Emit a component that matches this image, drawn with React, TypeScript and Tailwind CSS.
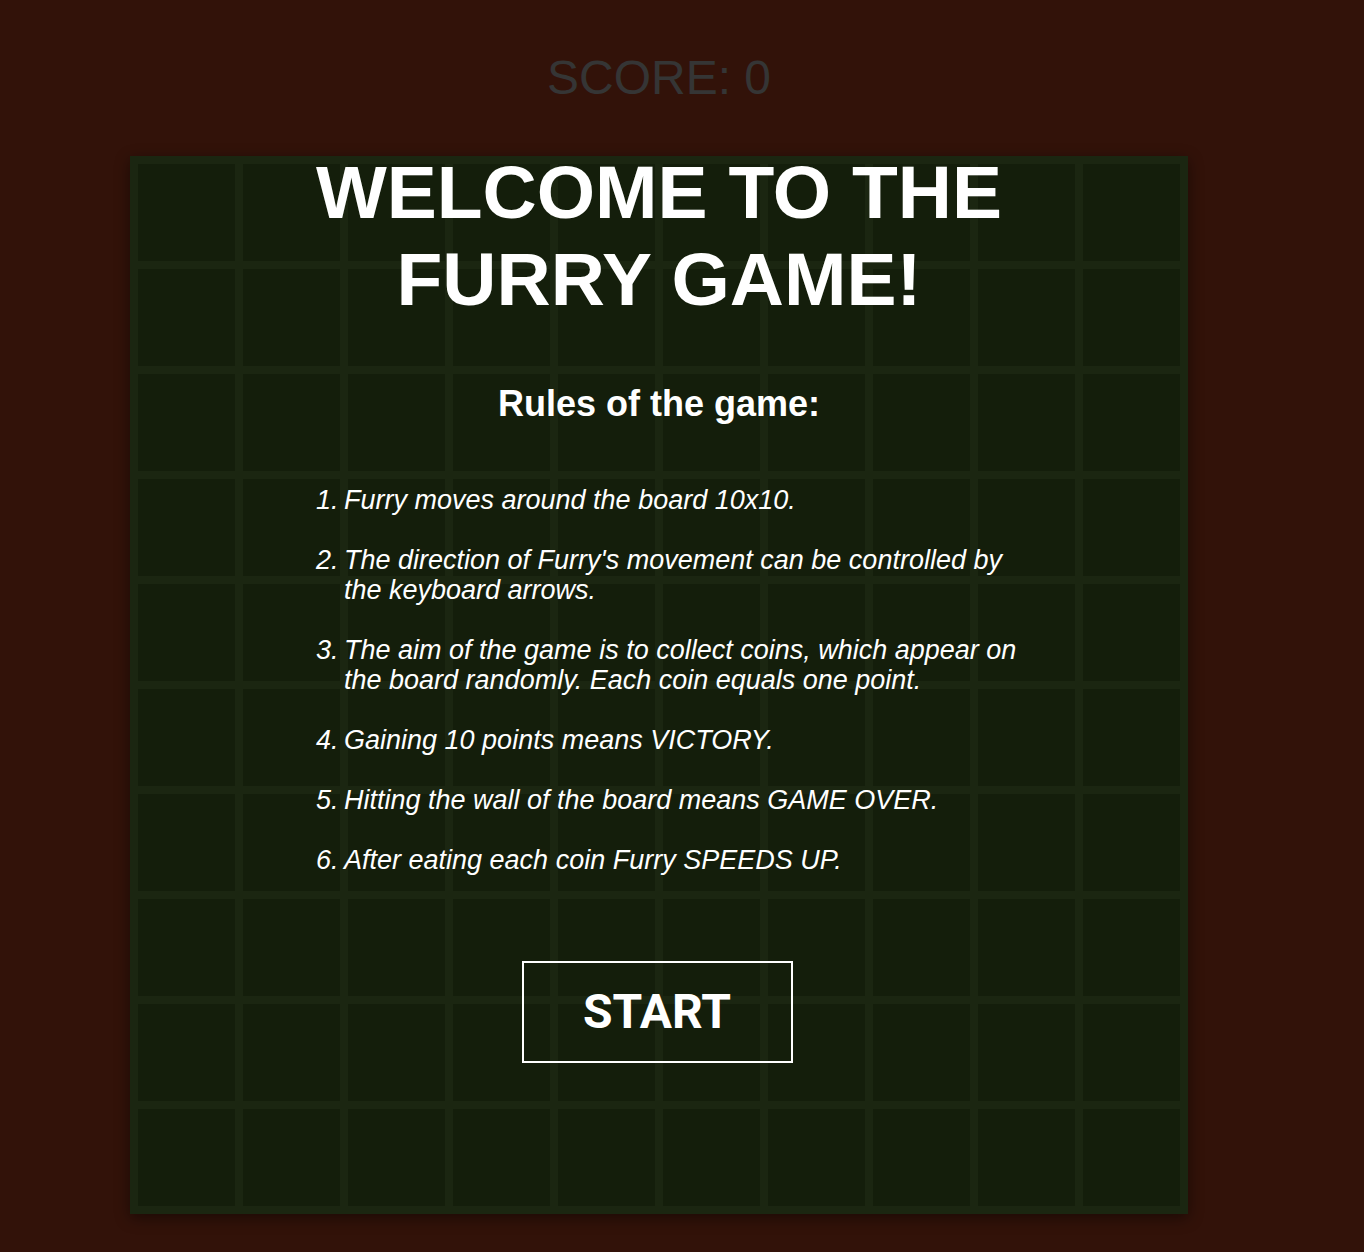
import React from "react";

const rules: string[] = [
  "Furry moves around the board 10x10.",
  "The direction of Furry's movement can be controlled by the keyboard arrows.",
  "The aim of the game is to collect coins, which appear on the board randomly. Each coin equals one point.",
  "Gaining 10 points means VICTORY.",
  "Hitting the wall of the board means GAME OVER.",
  "After eating each coin Furry SPEEDS UP.",
];

export default function App() {
  const cells = Array.from({ length: 100 }, (_, i) => i);

  return (
    <main className="min-h-screen bg-[#321209] font-['Liberation_Sans',Arial,sans-serif]">
      <div className="w-[1318px] flex flex-col items-center">
        {/* score */}
        <div className="mt-[50px] text-[48px] leading-[55px] text-[#353535]">SCORE: 0</div>

        {/* board */}
        <section className="relative mt-[51px] border-4 border-[#1b2611] shadow-[0_4px_14px_rgba(0,0,0,0.45)]">
          <div className="grid grid-cols-[repeat(10,105px)] grid-rows-[repeat(10,105px)]">
            {cells.map((c) => (
              <div key={c} className="border-4 border-[#1b2611] bg-[#141e0b]" />
            ))}
          </div>

          {/* start screen overlay */}
          <div className="absolute left-0 right-0 top-[-11px] flex flex-col items-center text-white">
            <h1 className="w-[720px] text-center text-[75px] leading-[87px] font-bold">
              WELCOME TO THE FURRY GAME!
            </h1>
            <h2 className="mt-[61px] text-[36px] leading-[40px] font-bold">Rules of the game:</h2>
            <ol className="mt-[61px] self-start ml-[182px] w-[714px] flex flex-col gap-[30px] text-[27px] leading-[30px] italic">
              {rules.map((r, i) => (
                <li key={i} className="flex">
                  <span className="w-[28px] shrink-0">{i + 1}.</span>
                  <span>{r}</span>
                </li>
              ))}
            </ol>
            <button className="mt-[86px] ml-[-4px] w-[271px] h-[102px] border-2 border-white text-[48px] font-bold font-['Roboto',sans-serif] text-white">
              START
            </button>
          </div>
        </section>
      </div>
    </main>
  );
}
